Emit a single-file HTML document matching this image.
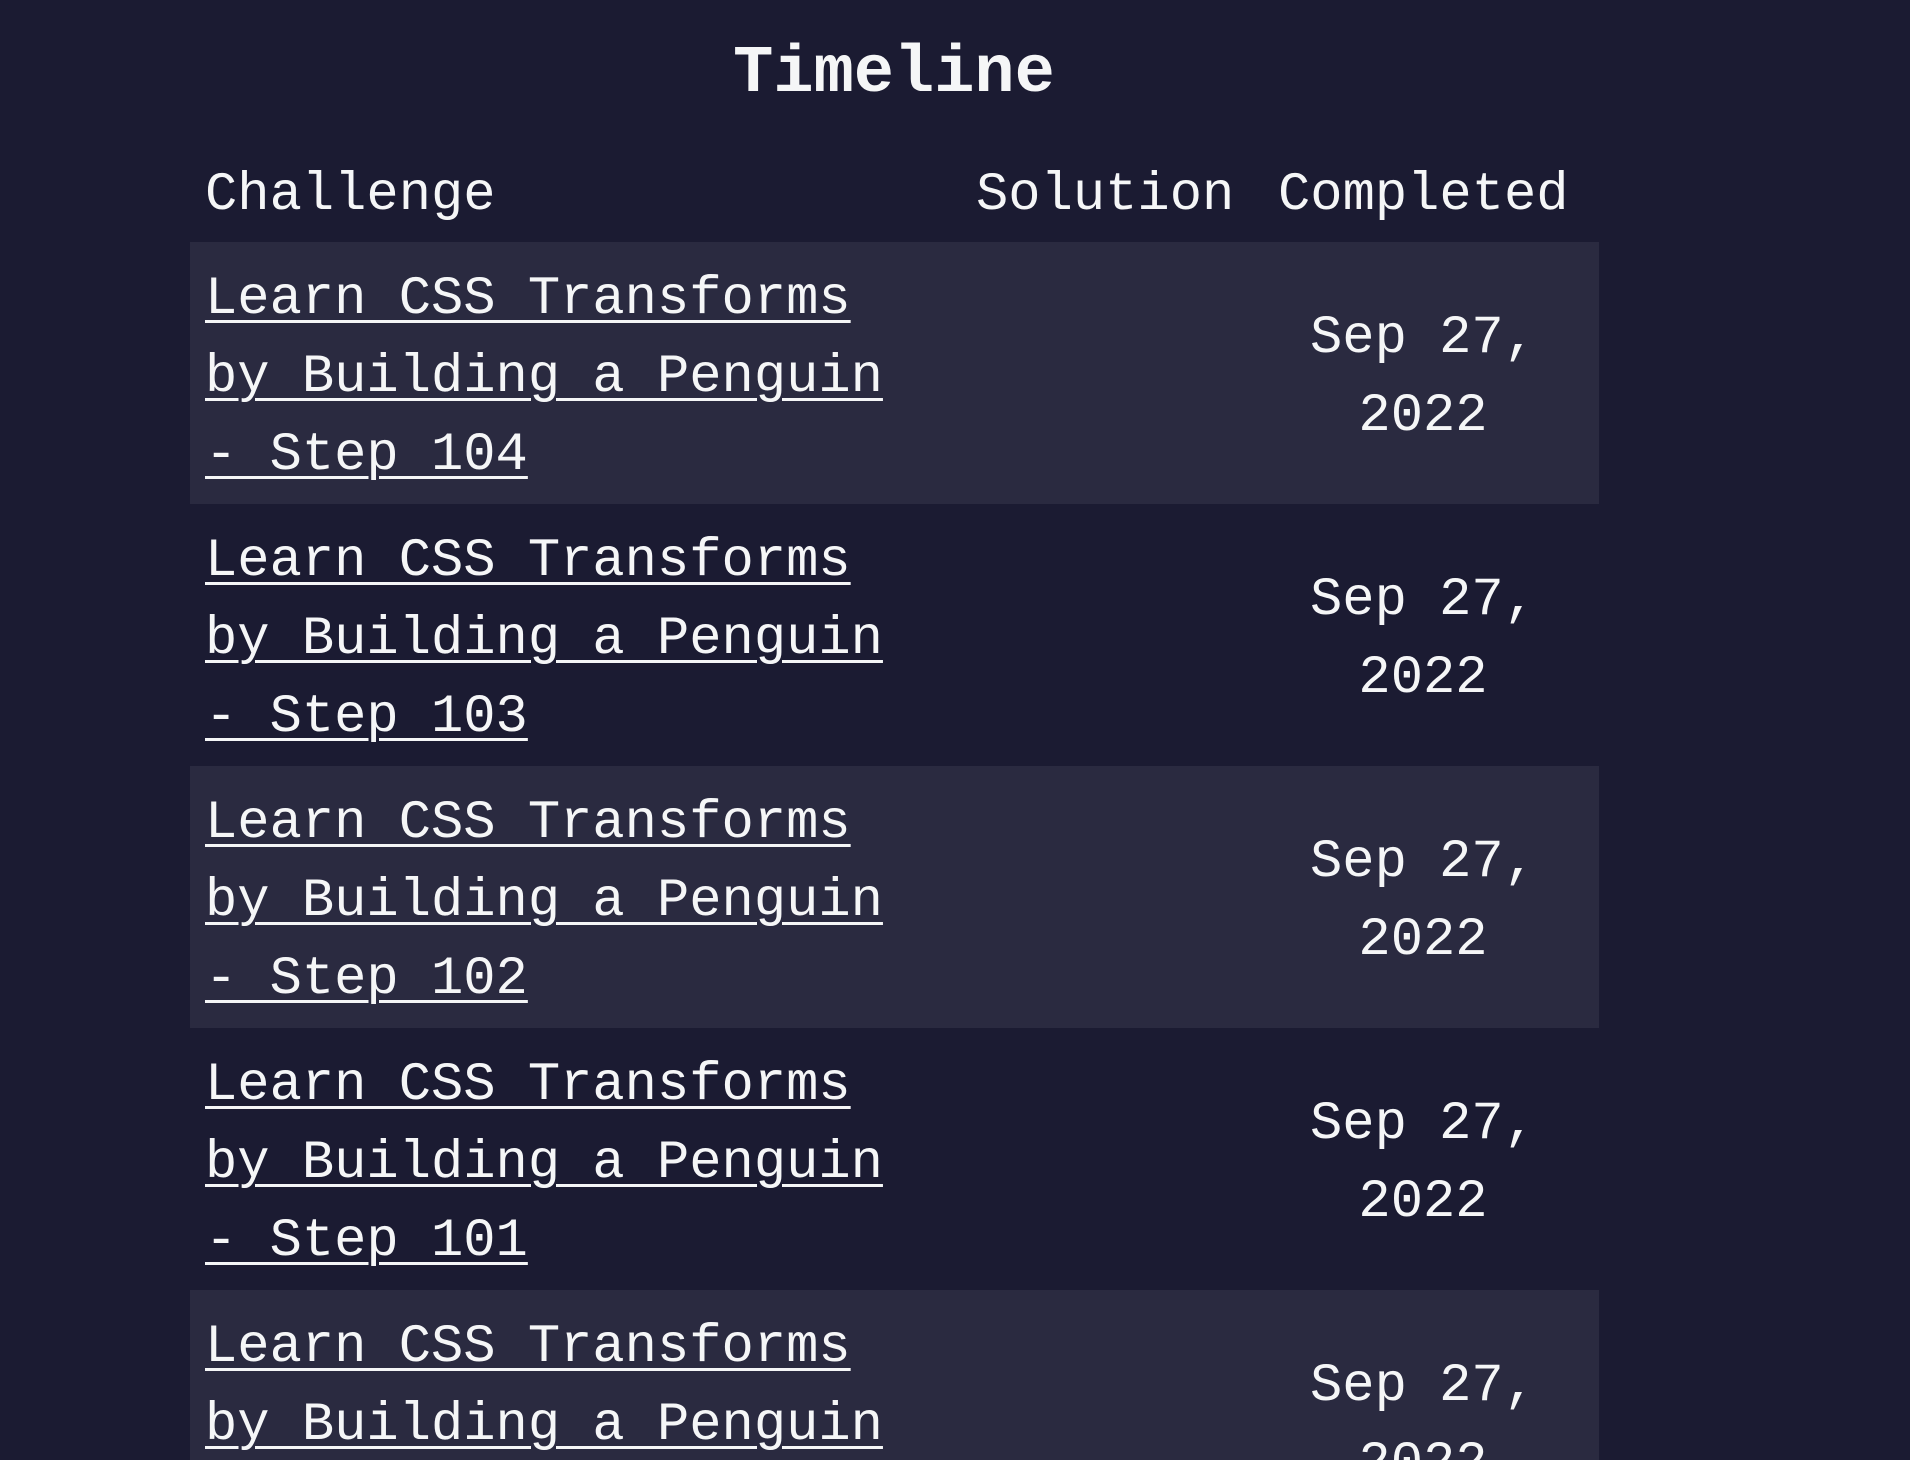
<!DOCTYPE html>
<html><head><meta charset="utf-8"><style>
html,body{margin:0;padding:0;background:#1b1b32;width:1910px;height:1460px;overflow:hidden;color:#f5f6f7;font-family:"Liberation Mono",monospace;}
#wrap{position:relative;width:1910px;height:1460px;overflow:hidden;}
h1{position:absolute;left:0;width:1788px;top:33px;margin:0;text-align:center;font-size:67px;line-height:82px;font-weight:bold;}
table{position:absolute;left:190px;top:136px;border-collapse:collapse;font-size:53.8px;line-height:78px;}
td,th{padding:19px 15px 9px 15px;vertical-align:middle;text-align:left;font-weight:normal;}
th{height:74px;padding-top:21px;padding-bottom:7px;}
.c1{width:741px}.c2{width:272px}.c3{width:306px;text-align:center}
td.c3{padding-right:31px;width:290px}
th.c3{text-align:left}
tr.s{background:#2a2a40}
a{color:#f5f6f7;text-decoration:underline;text-decoration-thickness:3px;text-underline-offset:7px;}
</style></head><body><div id="wrap">
<h1>Timeline</h1>
<table>
<tr><th class="c1">Challenge</th><th class="c2">Solution</th><th class="c3">Completed</th></tr>
<tr class="s"><td class="c1"><a>Learn CSS Transforms<br>by Building a Penguin<br>- Step 104</a></td><td class="c2"></td><td class="c3">Sep 27,<br>2022</td></tr>
<tr><td class="c1"><a>Learn CSS Transforms<br>by Building a Penguin<br>- Step 103</a></td><td class="c2"></td><td class="c3">Sep 27,<br>2022</td></tr>
<tr class="s"><td class="c1"><a>Learn CSS Transforms<br>by Building a Penguin<br>- Step 102</a></td><td class="c2"></td><td class="c3">Sep 27,<br>2022</td></tr>
<tr><td class="c1"><a>Learn CSS Transforms<br>by Building a Penguin<br>- Step 101</a></td><td class="c2"></td><td class="c3">Sep 27,<br>2022</td></tr>
<tr class="s"><td class="c1"><a>Learn CSS Transforms<br>by Building a Penguin<br>- Step 100</a></td><td class="c2"></td><td class="c3">Sep 27,<br>2022</td></tr>
</table>
</div></body></html>
